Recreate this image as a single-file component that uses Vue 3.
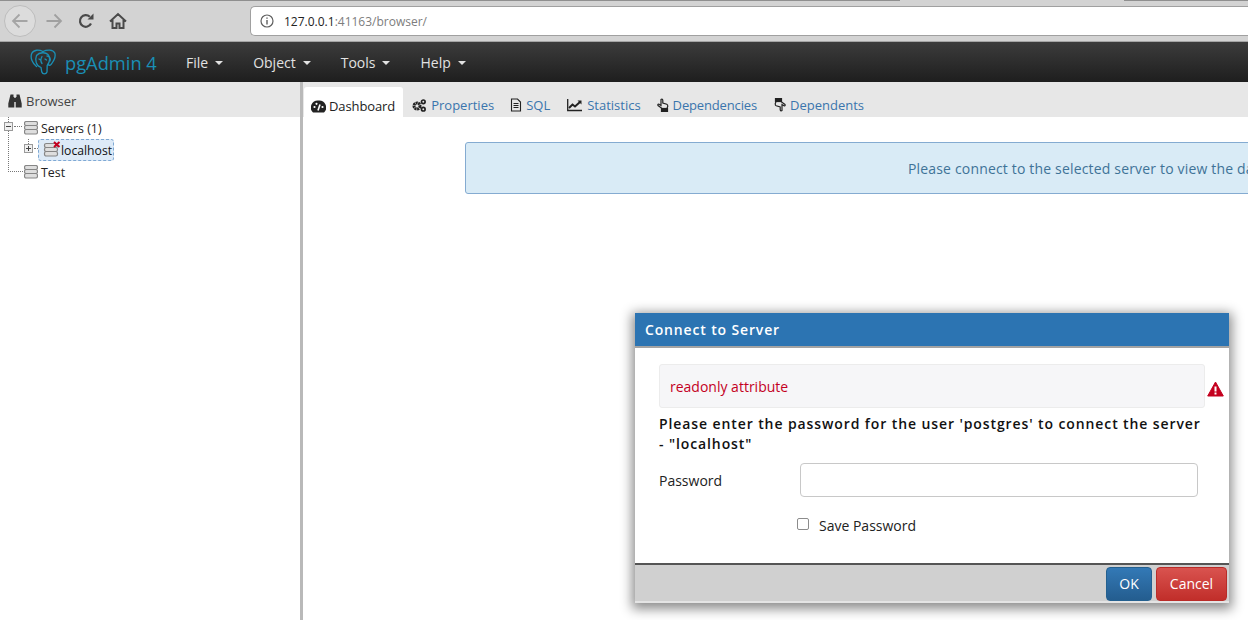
<script setup>
const menus = ['File', 'Object', 'Tools', 'Help']
</script>

<template>
  <div class="page">
    <div class="chrome">
      <i class="tab-gap"></i>
      <div class="nav-back">
        <svg width="20" height="20" viewBox="0 0 20 20"><path d="M17.500 10H3.500M9.500 3.500L3 10l6.500 6.500" fill="none" stroke="#a5a5a5" stroke-width="1.800"/></svg>
      </div>
      <svg class="fwd" width="20" height="20" viewBox="0 0 20 20"><path d="M2.500 10h14M10.500 3.500L17 10l-6.500 6.500" fill="none" stroke="#a0a0a0" stroke-width="1.800"/></svg>
      <svg class="reload" width="18" height="18" viewBox="0 0 18 18"><path d="M14 11.500A5.800 5.800 0 1 1 12.800 4.800" fill="none" stroke="#4a4a4a" stroke-width="2.200"/><path d="M10.500 7.500h6v-6z" fill="#4a4a4a"/></svg>
      <svg class="home" width="18" height="18" viewBox="0 0 18 18"><path d="M1 9.500L9 2l8 7.500M3.500 8v8h4v-4.500h3V16h4V8" fill="none" stroke="#4a4a4a" stroke-width="2"/></svg>
      <div class="url">
        <svg width="16" height="16" viewBox="0 0 16 16"><circle cx="8" cy="8" r="6" fill="none" stroke="#5f5f5f" stroke-width="1.200"/><path d="M8 7v4.500M8 4.500v1.300" stroke="#5f5f5f" stroke-width="1.400"/></svg>
        <span class="host">127.0.0.1</span><span class="path">:41163/browser/</span>
      </div>
    </div>

    <nav class="navbar">
      <svg class="logo" width="26" height="26" viewBox="0 0 26 26" fill="none" stroke="#1a8fb5" stroke-width="1.300" stroke-linecap="round">
        <path d="M13 2.500C9 .5 3.500 .5 1.700 4.500 0 9 2.500 14.500 6.500 17.500"/>
        <path d="M13 2.500C17 .5 23 .5 24.800 4c1.200 4-1.300 8.500-3.800 11.500-1 1-2.500.5-3 0"/>
        <path d="M6.500 6.500C4.800 11 6 17 11 18.500l.8 4.500c.8 2.500 4.300 2.500 5.200 0l.2-6.500c2.800-3.500 3.300-8.500.8-11C15.500 3 9.500 3 6.500 6.500z"/>
        <path d="M12 7.500c-1.500 2.500-1.500 5 0 7M17 7c2.500 0 4 2.500 3 5M9 10l1.500 1M15 10l1.500 1"/>
      </svg>
      <span class="brand">pgAdmin 4</span>
      <div class="menus">
        <span v-for="m in menus" :key="m" class="menu">{{ m }}<i class="caret"></i></span>
      </div>
    </nav>

    <div class="main">
      <aside class="left">
        <div class="panel-title">
          <svg width="14" height="14" viewBox="0 0 14 14" fill="#333"><path d="M2.500 .5h3v2.500H6.300v10.500H.3V9.500z"/><path d="M11.500 .5h-3v2.500H7.700v10.500h6V9.500z"/><rect x="6" y="4" width="2" height="4"/></svg>
          <span>Browser</span>
        </div>
        <div class="tree">
          <div class="row r1">
            <i class="exp"><b class="h"></b></i><i class="dots"></i>
            <svg class="srv" width="14" height="14" viewBox="0 0 14 14"><use href="#srv-shape"/></svg>
            <span>Servers (1)</span>
          </div>
          <div class="row r2">
            <i class="exp"><b class="h"></b><b class="v"></b></i><i class="dots short"></i>
            <div class="sel">
              <svg class="srv" width="20" height="18" viewBox="0 0 20 18">
                <g transform="translate(2 2)"><use href="#srv-shape"/></g>
                <path d="M12 1l5.500 5M17.500 1L12 6" stroke="#c4001f" stroke-width="2"/>
              </svg>
              <span>localhost</span>
            </div>
          </div>
          <div class="row r3">
            <i class="dots long"></i>
            <svg class="srv" width="14" height="14" viewBox="0 0 14 14"><use href="#srv-shape"/></svg>
            <span>Test</span>
          </div>
          <i class="vline"></i>
        </div>
        <svg width="0" height="0" class="defs">
          <defs>
            <g id="srv-shape" fill="#dedede" stroke="#868686" stroke-width="1.200">
              <rect x="0.500" y="0.500" width="13" height="4" rx="1.800"/>
              <rect x="0.500" y="4.500" width="13" height="4" rx="1.800"/>
              <rect x="0.500" y="8.500" width="13" height="4.500" rx="1.800"/>
            </g>
          </defs>
        </svg>
      </aside>
      <div class="splitter"></div>
      <section class="right">
        <div class="tabs">
          <div class="tab active">
            <svg width="15" height="13" viewBox="0 0 15 13"><path d="M7.500 .5A7 7 0 0 0 2 12.500h11A7 7 0 0 0 7.500 .5z" fill="#222"/><circle cx="3.500" cy="7" r="1.100" fill="#fff"/><circle cx="5.500" cy="3.800" r="1.100" fill="#fff"/><circle cx="11.500" cy="7" r="1.100" fill="#fff"/><path d="M7 10.500l2-6" stroke="#fff" stroke-width="1.600"/></svg>
            <span>Dashboard</span>
          </div>
          <div class="tab props">
            <svg width="14" height="13" viewBox="0 0 14 13"><circle cx="5" cy="7" r="3" fill="none" stroke="#222" stroke-width="3" stroke-dasharray="2 .5"/><circle cx="11.300" cy="2.800" r="1.800" fill="none" stroke="#222" stroke-width="1.700"/><circle cx="11.300" cy="10.200" r="1.800" fill="none" stroke="#222" stroke-width="1.700"/></svg>
            <span>Properties</span>
          </div>
          <div class="tab">
            <svg width="12" height="14" viewBox="0 0 12 14" fill="none" stroke="#222"><path d="M1.500 1h6l3 3v9h-9z" stroke-width="1.100"/><path d="M3.500 5.500h5M3.500 7.500h5M3.500 9.500h5" stroke-width="1"/></svg>
            <span>SQL</span>
          </div>
          <div class="tab stat">
            <svg width="15" height="13" viewBox="0 0 15 13" fill="none" stroke="#222"><path d="M.7 0v11.500H15" stroke-width="1.300"/><path d="M2 9l3.500-3.500 2.500 2L13 3" stroke-width="2"/><path d="M10.500 1.500h4v4z" fill="#222" stroke="none"/></svg>
            <span>Statistics</span>
          </div>
          <div class="tab deps">
            <svg width="12" height="14" viewBox="0 0 12 14" fill="none" stroke="#222" stroke-width="1.200"><path d="M4 1.500c1-.8 1.800 0 1.800 1V5l4 1.200c1 .4 1 1 1 2l-.8 2.300H5L1 7.500c-.7-1 .5-1.800 1.500-1l1.500 1z"/><rect x="4.500" y="10.500" width="6" height="3" fill="#222"/></svg>
            <span>Dependencies</span>
          </div>
          <div class="tab">
            <svg width="12" height="14" viewBox="0 0 12 14" fill="none" stroke="#222" stroke-width="1.200"><path d="M8 12.500c-1 .8-1.800 0-1.800-1V9l-4-1.200c-1-.4-1-1-1-2L2 3.500h5l4 3c.7 1-.5 1.800-1.500 1L8 6.500z"/><rect x="1.500" y=".5" width="6" height="3" fill="#222"/></svg>
            <span>Dependents</span>
          </div>
        </div>
        <div class="content">
          <div class="alert">Please connect to the selected server to view the dashboard.</div>
        </div>
      </section>
    </div>

    <div class="dialog">
      <div class="dlg-head">Connect to Server</div>
      <div class="dlg-body">
        <div class="err-row">
          <div class="err">readonly attribute</div>
          <svg width="17" height="16" viewBox="0 0 17 16"><path d="M8.500 1L16.300 15H.7z" fill="#c4001f" stroke="#c4001f" stroke-linejoin="round"/><path d="M8.500 5.500v5M8.500 11.500v2" stroke="#fff" stroke-width="2"/></svg>
        </div>
        <p class="msg">Please enter the password for the user 'postgres' to connect the server - "localhost"</p>
        <div class="field">
          <label>Password</label>
          <div class="input"></div>
        </div>
        <div class="save">
          <i class="check"></i>
          <span>Save Password</span>
        </div>
      </div>
      <div class="dlg-foot">
        <div class="btn ok">OK</div>
        <div class="btn cancel">Cancel</div>
      </div>
    </div>
  </div>
</template>

<style>
html, body { margin: 0; padding: 0; overflow: hidden; }
</style>

<style scoped>
.page {
  position: relative;
  width: 1248px;
  height: 620px;
  overflow: hidden;
  background: #fff;
  font-family: "Open Sans", sans-serif;
  font-size: 13px;
  color: #222;
}
.chrome {
  position: relative;
  height: 42px;
  box-sizing: border-box;
  background: #d3d3d3;
  border-top: 1px solid #8f8f8f;
  border-bottom: 1px solid #a5a5a5;
  display: flex;
  align-items: center;
  padding: 0 0 1px 4px;
}
.tab-gap {
  position: absolute;
  left: 900px;
  top: -1px;
  width: 224px;
  height: 1px;
  background: #d3d3d3;
}
.nav-back {
  width: 32px;
  height: 32px;
  border-radius: 50%;
  border: 1px solid #bdbdbd;
  background: #dcdcdc;
  display: flex;
  align-items: center;
  justify-content: center;
  box-sizing: border-box;
}
.fwd { margin-left: 8px; }
.reload { margin-left: 13px; }
.home { margin-left: 14px; }
.url {
  margin-left: 123px;
  flex: 1;
  height: 30px;
  align-self: flex-start;
  margin-top: 5px;
  box-sizing: border-box;
  background: #fff;
  border: 1px solid #a0a0a0;
  border-right: none;
  border-radius: 5px 0 0 5px;
  display: flex;
  align-items: center;
  padding-left: 8px;
  font-size: 12px;
}
.url svg { margin-right: 9px; }
.host { color: #222; }
.path { color: #7d7d7d; }
.navbar {
  height: 40px;
  background: linear-gradient(#3c3c3c, #1e1e1e);
  display: flex;
  align-items: center;
  padding-left: 30px;
}
.logo { flex: none; }
.brand {
  margin-left: 9px;
  color: #1a8fb5;
  font-size: 18.300px;
  width: 92px;
  flex: none;
  white-space: nowrap;
}
.menus {
  display: flex;
  margin-left: 29px;
  gap: 30px;
}
.menu {
  color: #e2e2e2;
  font-size: 14px;
  display: flex;
  align-items: center;
}
.caret {
  margin-left: 7px;
  margin-top: 2px;
  border-top: 4px solid #e2e2e2;
  border-left: 4px solid transparent;
  border-right: 4px solid transparent;
}
.main {
  display: flex;
  height: 538px;
}
.left { width: 300px; flex: none; }
.panel-title {
  height: 35px;
  box-sizing: border-box;
  padding: 2px 0 0 8px;
  background: #e7e7e7;
  display: flex;
  align-items: center;
  gap: 4px;
  color: #444;
}
.tree {
  position: relative;
  font-size: 12.400px;
}
.defs { position: absolute; }
.row {
  height: 22px;
  position: relative;
  display: flex;
  align-items: center;
  color: #222;
}
.r1, .r3 { padding-left: 24px; gap: 3px; }
.r2 { padding-left: 38px; }
.exp {
  position: absolute;
  width: 9px;
  height: 9px;
  box-sizing: border-box;
  border: 1px solid #9a9a9a;
  background: #f0f0f0;
  top: 5px;
  z-index: 1;
}
.r1 .exp { left: 4px; }
.r2 .exp { left: 24px; }
.r2 .exp::before {
  content: "";
  position: absolute;
  left: 3px;
  top: -6px;
  height: 5px;
  border-left: 1px dotted #777;
}
.exp .h {
  position: absolute;
  left: 1px;
  right: 1px;
  top: 3px;
  height: 1px;
  background: #444;
}
.exp .v {
  position: absolute;
  left: 3px;
  top: 1px;
  bottom: 1px;
  width: 1px;
  background: #444;
}
.dots {
  position: absolute;
  left: 14px;
  top: 9px;
  width: 8px;
  border-top: 1px dotted #777;
}
.dots.short { left: 34px; width: 4px; }
.dots.long { left: 8px; width: 15px; top: 10px; }
.vline {
  position: absolute;
  left: 8px;
  top: 0;
  height: 55px;
  border-left: 1px dotted #777;
}
.sel {
  height: 22px;
  width: 76px;
  box-sizing: border-box;
  background: #ddeaf7;
  border: 1px dashed #7fa9d4;
  border-radius: 3px;
  display: flex;
  align-items: center;
  padding-left: 3px;
  color: #111;
  font-size: 12.200px;
}
.sel .srv { margin-right: -1px; flex: none; }
.splitter {
  width: 3px;
  flex: none;
  background: #b9b9b9;
}
.right { flex: 1; min-width: 0; }
.tabs {
  height: 35px;
  background: #e7e7e7;
  display: flex;
  align-items: flex-end;
  padding-left: 1px;
}
.tab {
  height: 31px;
  box-sizing: border-box;
  display: flex;
  align-items: center;
  gap: 4px;
  padding: 7px 7px 0 7px;
  color: #3a75ad;
  margin-right: 2px;
}
.tab.active {
  height: 30px;
  background: #fff;
  color: #222;
  border-radius: 3px 3px 0 0;
  padding: 8px 8px 0 7px;
  gap: 3px;
  letter-spacing: -0.1px;
}
.tab.props { gap: 5px; }
.tab.stat { gap: 5px; margin-left: 1px; }
.tab.deps { margin-right: 3px; letter-spacing: -0.15px; }
.content {
  padding: 25px 0 0 162px;
  overflow: hidden;
}
.alert {
  height: 52px;
  box-sizing: border-box;
  width: 900px;
  background: #d9ebf6;
  border: 1px solid #84abd1;
  border-radius: 3px;
  color: #3f7398;
  font-size: 14px;
  letter-spacing: 0.17px;
  line-height: 52px;
  white-space: nowrap;
  padding-left: 442px;
}
.dialog {
  position: absolute;
  left: 635px;
  top: 313px;
  width: 594px;
  height: 290px;
  background: #fff;
  box-shadow: 0 3px 11px 3px rgba(0, 0, 0, 0.45);
  display: flex;
  flex-direction: column;
}
.dlg-head {
  height: 33px;
  background: #2c74b2;
  border-bottom: 2px solid #a3a3a3;
  color: #fff;
  font-weight: 600;
  font-size: 14px;
  letter-spacing: 0.85px;
  line-height: 33px;
  padding-left: 10px;
  flex: none;
}
.dlg-body {
  flex: 1;
  padding: 16px 24px 0;
}
.err-row {
  display: flex;
  align-items: center;
  margin-right: -19px;
  gap: 2px;
}
.err-row svg { margin-top: 5px; }
.err {
  width: 546px;
  height: 44px;
  box-sizing: border-box;
  background: #f6f6f8;
  border: 1px solid #ececec;
  border-radius: 3px;
  color: #c4001f;
  font-size: 14px;
  line-height: 44px;
  padding-left: 10px;
}
.msg {
  margin: 6px 0 0;
  width: 546px;
  font-weight: 600;
  font-size: 14px;
  letter-spacing: 0.9px;
  line-height: 20px;
  color: #111;
}
.field {
  display: flex;
  align-items: center;
  margin-top: 9px;
}
.field label { width: 141px; font-size: 14px; color: #222; }
.input {
  width: 398px;
  height: 34px;
  box-sizing: border-box;
  border: 1px solid #c8c8c8;
  border-radius: 4px;
}
.save {
  display: flex;
  align-items: center;
  margin: 19px 0 0 138px;
  font-size: 14px;
  color: #222;
}
.check {
  width: 10px;
  height: 10px;
  border: 1px solid #8c8c8c;
  border-radius: 2px;
  background: #fff;
  margin-right: 10px;
  margin-top: -3px;
}
.dlg-foot {
  height: 40px;
  box-sizing: border-box;
  flex: none;
  background: #d0d0d0;
  border-top: 2px solid #555;
  box-shadow: inset 0 -2px #e4e4e4;
  display: flex;
  justify-content: flex-end;
  align-items: flex-start;
  gap: 4px;
  padding: 2px 2px 0 0;
}
.btn {
  height: 34px;
  box-sizing: border-box;
  border-radius: 4px;
  color: #fff;
  font-size: 14px;
  display: flex;
  align-items: center;
  justify-content: center;
  padding-bottom: 2px;
}
.ok {
  width: 46px;
  background: linear-gradient(#3379b6, #245d8f);
  border: 1px solid #24608f;
}
.cancel {
  width: 71px;
  background: linear-gradient(#d9534f, #c12e2a);
  border: 1px solid #b92c28;
}
</style>
